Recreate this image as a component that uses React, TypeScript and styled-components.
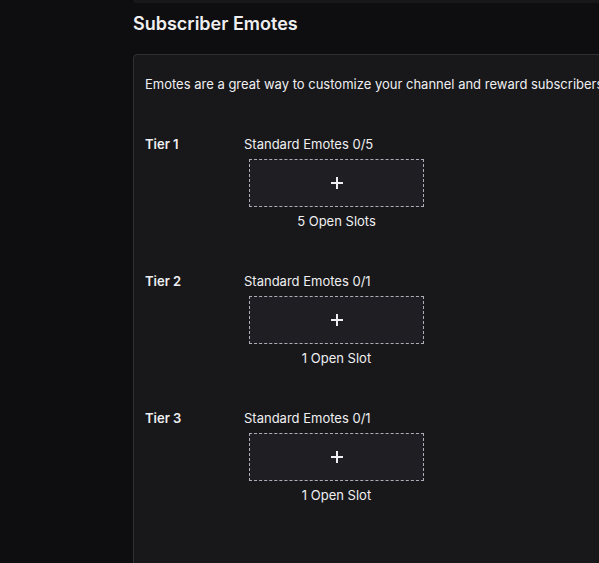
import React from "react";
import styled, { createGlobalStyle } from "styled-components";

const Global = createGlobalStyle`
  html, body { margin: 0; padding: 0; background: #0e0e10; overflow: hidden; }
  body { font-family: Inter, "Noto Sans", "Liberation Sans", sans-serif; color: #efeff1; -webkit-font-smoothing: antialiased; }
  * { box-sizing: border-box; }
`;

const Page = styled.div`
  display: grid;
  grid-template-columns: 133px 1fr;
  height: 563px;
  overflow: hidden;
`;

const Content = styled.main`
  display: flex;
  flex-direction: column;
  min-width: 0;
`;

const PrevCardEdge = styled.div`
  height: 3px;
  flex: none;
  background: #18181b;
  border-radius: 0 0 4px 4px;
  margin-right: -6px;
`;

const Title = styled.h2`
  margin: 9px 0 18px;
  font-size: 18px;
  line-height: 24px;
  font-weight: 600;
  color: #efeff1;
  white-space: nowrap;
`;

const Card = styled.section`
  background: #18181b;
  border: 1px solid #2f2f35;
  border-radius: 4px;
  margin-right: -20px;
  padding: 19px 11px 120px;
  flex: none;
`;

const Description = styled.p`
  margin: 0 0 40px;
  font-size: 13px;
  line-height: 20px;
  color: #efeff1;
  white-space: nowrap;
`;

const TierList = styled.div`
  display: flex;
  flex-direction: column;
  gap: 40px;
`;

const TierRow = styled.div`
  display: grid;
  grid-template-columns: 99px 185px;
`;

const TierName = styled.div`
  font-size: 13px;
  line-height: 20px;
  font-weight: 600;
  color: #efeff1;
`;

const SlotColumn = styled.div`
  display: flex;
  flex-direction: column;
`;

const SlotHeading = styled.div`
  font-size: 13px;
  line-height: 20px;
  color: #efeff1;
  white-space: nowrap;
`;

const SlotBox = styled.button`
  margin: 5px auto 4px;
  width: 175px;
  height: 48px;
  background: #1f1f23;
  border: 1px dashed #adadb8;
  border-radius: 0;
  display: flex;
  align-items: center;
  justify-content: center;
  padding: 0;
  cursor: pointer;
`;

const SlotCaption = styled.div`
  text-align: center;
  font-size: 13px;
  line-height: 20px;
  color: #efeff1;
`;

const PlusIcon = () => (
  <svg width="12" height="12" viewBox="0 0 12 12" aria-hidden="true">
    <path d="M6 0v12M0 6h12" stroke="#efeff1" strokeWidth="2" />
  </svg>
);

const tiers = [
  { name: "Tier 1", used: 0, total: 5 },
  { name: "Tier 2", used: 0, total: 1 },
  { name: "Tier 3", used: 0, total: 1 },
];

export default function App() {
  return (
    <>
      <Global />
      <Page>
        <div />
        <Content>
          <PrevCardEdge />
          <Title>Subscriber Emotes</Title>
          <Card>
            <Description>
              Emotes are a great way to customize your channel and reward subscribers for their support.
            </Description>
            <TierList>
              {tiers.map((t) => {
                const open = t.total - t.used;
                return (
                  <TierRow key={t.name}>
                    <TierName>{t.name}</TierName>
                    <SlotColumn>
                      <SlotHeading>
                        Standard Emotes {t.used}/{t.total}
                      </SlotHeading>
                      <SlotBox aria-label="Add emote">
                        <PlusIcon />
                      </SlotBox>
                      <SlotCaption>
                        {open} Open {open === 1 ? "Slot" : "Slots"}
                      </SlotCaption>
                    </SlotColumn>
                  </TierRow>
                );
              })}
            </TierList>
          </Card>
        </Content>
      </Page>
    </>
  );
}
